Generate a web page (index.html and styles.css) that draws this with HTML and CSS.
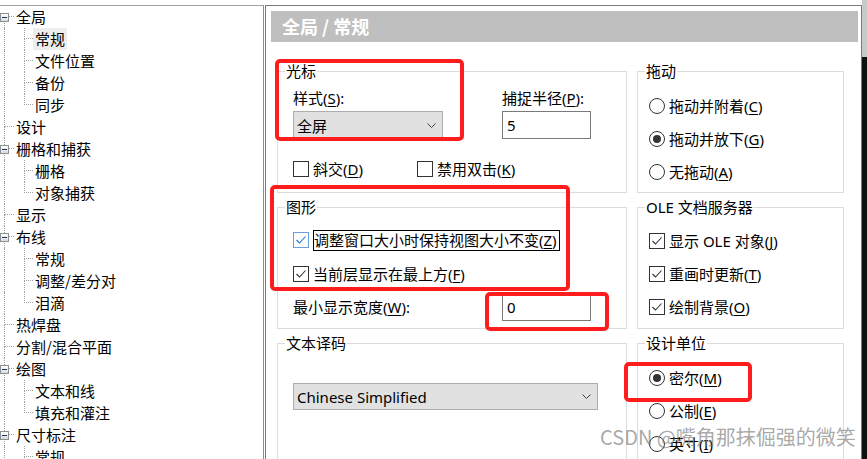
FILE: index.html
```html
<!DOCTYPE html>
<html lang="zh-CN">
<head>
<meta charset="utf-8">
<title>全局 / 常规</title>
<link rel="stylesheet" href="styles.css">
</head>
<body>
<div class="screen">
  <div class="main">
    <nav class="tree">
      <div class="row"><span class="g0 first"><i class="lt"></i><i class="lb"></i><b class="exp"></b></span><span class="lbl">全局</span></div>
      <div class="row"><span class="g0"><i class="lf"></i></span><span class="g1"><i class="lt"></i><i class="lb"></i></span><span class="lbl sel">常规</span></div>
      <div class="row"><span class="g0"><i class="lf"></i></span><span class="g1"><i class="lt"></i><i class="lb"></i></span><span class="lbl">文件位置</span></div>
      <div class="row"><span class="g0"><i class="lf"></i></span><span class="g1"><i class="lt"></i><i class="lb"></i></span><span class="lbl">备份</span></div>
      <div class="row"><span class="g0"><i class="lf"></i></span><span class="g1 last"><i class="lt"></i><i class="lb"></i></span><span class="lbl">同步</span></div>
      <div class="row"><span class="g0"><i class="lt"></i><i class="lb"></i></span><span class="lbl">设计</span></div>
      <div class="row"><span class="g0"><i class="lt"></i><i class="lb"></i><b class="exp"></b></span><span class="lbl">栅格和捕获</span></div>
      <div class="row"><span class="g0"><i class="lf"></i></span><span class="g1"><i class="lt"></i><i class="lb"></i></span><span class="lbl">栅格</span></div>
      <div class="row"><span class="g0"><i class="lf"></i></span><span class="g1 last"><i class="lt"></i><i class="lb"></i></span><span class="lbl">对象捕获</span></div>
      <div class="row"><span class="g0"><i class="lt"></i><i class="lb"></i></span><span class="lbl">显示</span></div>
      <div class="row"><span class="g0"><i class="lt"></i><i class="lb"></i><b class="exp"></b></span><span class="lbl">布线</span></div>
      <div class="row"><span class="g0"><i class="lf"></i></span><span class="g1"><i class="lt"></i><i class="lb"></i></span><span class="lbl">常规</span></div>
      <div class="row"><span class="g0"><i class="lf"></i></span><span class="g1"><i class="lt"></i><i class="lb"></i></span><span class="lbl">调整/差分对</span></div>
      <div class="row"><span class="g0"><i class="lf"></i></span><span class="g1 last"><i class="lt"></i><i class="lb"></i></span><span class="lbl">泪滴</span></div>
      <div class="row"><span class="g0"><i class="lt"></i><i class="lb"></i></span><span class="lbl">热焊盘</span></div>
      <div class="row"><span class="g0"><i class="lt"></i><i class="lb"></i></span><span class="lbl">分割/混合平面</span></div>
      <div class="row"><span class="g0"><i class="lt"></i><i class="lb"></i><b class="exp"></b></span><span class="lbl">绘图</span></div>
      <div class="row"><span class="g0"><i class="lf"></i></span><span class="g1"><i class="lt"></i><i class="lb"></i></span><span class="lbl">文本和线</span></div>
      <div class="row"><span class="g0"><i class="lf"></i></span><span class="g1 last"><i class="lt"></i><i class="lb"></i></span><span class="lbl">填充和灌注</span></div>
      <div class="row"><span class="g0"><i class="lt"></i><i class="lb"></i><b class="exp"></b></span><span class="lbl">尺寸标注</span></div>
      <div class="row"><span class="g0"><i class="lf"></i></span><span class="g1"><i class="lt"></i><i class="lb"></i></span><span class="lbl">常规</span></div>
    </nav>

    <section class="dialog">
      <div class="title">全局 / 常规</div>
      <div class="groups">
        <fieldset class="grp">
          <legend>光标</legend>
          <div class="body-cursor">
            <div class="pair labels"><span class="col">样式(<u>S</u>):</span><span>捕捉半径(<u>P</u>):</span></div>
            <div class="pair fields">
              <div class="col"><div class="combo w150"><span>全屏</span><svg class="chev" viewBox="0 0 9 5"><polyline points="0.5,0.5 4.5,4.5 8.5,0.5"/></svg></div></div>
              <div class="edit">5</div>
            </div>
            <div class="checks">
              <label class="chk w124"><span class="box"></span><span>斜交(<u>D</u>)</span></label>
              <label class="chk"><span class="box"></span><span>禁用双击(<u>K</u>)</span></label>
            </div>
          </div>
        </fieldset>

        <fieldset class="grp">
          <legend>拖动</legend>
          <div class="list">
            <label class="opt"><span class="radio"></span><span>拖动并附着(<u>C</u>)</span></label>
            <label class="opt"><span class="radio on"></span><span>拖动并放下(<u>G</u>)</span></label>
            <label class="opt"><span class="radio"></span><span>无拖动(<u>A</u>)</span></label>
          </div>
        </fieldset>

        <fieldset class="grp">
          <legend>图形</legend>
          <div class="body-gfx">
            <label class="chk line"><span class="box focus"><svg viewBox="0 0 14 14"><polyline points="2.5,7 5.5,10 11.5,3.5"/></svg></span><span class="focus-rect">调整窗口大小时保持视图大小不变(<u>Z</u>)</span></label>
            <label class="chk line second"><span class="box"><svg viewBox="0 0 14 14"><polyline points="2.5,7 5.5,10 11.5,3.5"/></svg></span><span>当前层显示在最上方(<u>F</u>)</span></label>
            <div class="pair width-row"><span class="col">最小显示宽度(<u>W</u>):</span><div class="edit">0</div></div>
          </div>
        </fieldset>

        <fieldset class="grp">
          <legend>OLE 文档服务器</legend>
          <div class="list ole">
            <label class="opt"><span class="box"><svg viewBox="0 0 14 14"><polyline points="2.5,7 5.5,10 11.5,3.5"/></svg></span><span>显示 OLE 对象(<u>J</u>)</span></label>
            <label class="opt"><span class="box"><svg viewBox="0 0 14 14"><polyline points="2.5,7 5.5,10 11.5,3.5"/></svg></span><span>重画时更新(<u>T</u>)</span></label>
            <label class="opt"><span class="box"><svg viewBox="0 0 14 14"><polyline points="2.5,7 5.5,10 11.5,3.5"/></svg></span><span>绘制背景(<u>O</u>)</span></label>
          </div>
        </fieldset>

        <fieldset class="grp">
          <legend>文本译码</legend>
          <div class="body-text">
            <div class="combo w305"><span>Chinese Simplified</span><svg class="chev" viewBox="0 0 9 5"><polyline points="0.5,0.5 4.5,4.5 8.5,0.5"/></svg></div>
          </div>
        </fieldset>

        <fieldset class="grp">
          <legend>设计单位</legend>
          <div class="list">
            <label class="opt"><span class="radio on"></span><span>密尔(<u>M</u>)</span></label>
            <label class="opt"><span class="radio"></span><span>公制(<u>E</u>)</span></label>
            <label class="opt"><span class="radio"></span><span>英寸(<u>I</u>)</span></label>
          </div>
        </fieldset>
      </div>
    </section>
  </div>
  <div class="edge"><div class="edge-top"></div><div class="edge-bot"></div></div>

  <div class="mark mark-1"></div>
  <div class="mark mark-2"></div>
  <div class="mark mark-3"></div>
  <div class="mark mark-4"></div>
  <div class="watermark">CSDN @嘴角那抹倔强的微笑</div>
</div>
</body>
</html>
```

FILE: styles.css
```css
* { box-sizing: border-box; }
html, body { margin: 0; padding: 0; background: #fff; }
body {
  font-family: "Noto Sans", "Noto Sans CJK SC", sans-serif;
  font-size: 15px;
  color: #000;
}
u { text-decoration: underline; text-underline-offset: 2px; }

.screen {
  position: relative;
  display: flex;
  width: 867px;
  height: 459px;
  overflow: hidden;
}
.main {
  display: flex;
  gap: 1px;
  width: 862px;
  flex: none;
  padding-top: 5px;
}

/* ---------- tree ---------- */
.tree {
  width: 264px;
  flex: none;
  border-top: 1px solid #a0a0a0;
  border-right: 1px solid #8c8c8c;
  overflow: hidden;
}
.row { display: flex; height: 22px; }
.g0, .g1 {
  display: grid;
  grid-template-rows: 11px 11px;
  height: 22px;
  flex: none;
}
.g0 { grid-template-columns: 4px 10px; width: 14px; }
.g1 { grid-template-columns: 10px 9px; width: 19px; }
.lt {
  grid-column: 2; grid-row: 1;
  border-left: 1px dotted #a0a0a0;
  border-bottom: 1px dotted #a0a0a0;
}
.lb { grid-column: 2; grid-row: 2; border-left: 1px dotted #a0a0a0; }
.lf { grid-column: 2; grid-row: 1 / 3; border-left: 1px dotted #a0a0a0; }
.first .lt { border-left: 0; }
.last .lb { border-left: 0; }
.exp {
  grid-column: 1 / 3; grid-row: 1 / 3;
  align-self: center; justify-self: start;
  width: 9px; height: 9px;
  margin-top: 1px;
  border: 1px solid #8e8f8f;
  background: linear-gradient(#ffffff, #d6dbe3);
  display: flex; align-items: center; justify-content: center;
}
.exp::before { content: ""; width: 5px; height: 1px; background: #24356b; }
.lbl {
  padding: 0 2px;
  line-height: 22px;
  white-space: nowrap;
  font-family: "Noto Sans CJK SC", sans-serif;
}
.sel { background: #ededed; }

/* ---------- dialog ---------- */
.dialog {
  width: 597px;
  flex: none;
  border: 1px solid #7a7a7a;
  border-bottom: 0;
  padding: 5px 3px 0 5px;
}
.title {
  height: 31px;
  line-height: 31px;
  background: #bfbfbf;
  color: #fff;
  font-family: "Noto Sans CJK SC", sans-serif;
  font-size: 18px;
  font-weight: bold;
  padding-left: 11px;
}
.groups {
  display: grid;
  grid-template-columns: 350px 207px;
  grid-template-rows: 131px 131px 131px;
  column-gap: 10px;
  row-gap: 5px;
  margin-top: 20px;
  padding-left: 6px;
}
.grp {
  margin: 0;
  padding: 0;
  border: 1px solid #dcdcdc;
  min-width: 0;
}
.grp > legend {
  margin-left: 7px;
  padding: 0 1px;
  line-height: 19px;
  font-size: 15px;
}

.pair { display: flex; align-items: center; }
.col { width: 209px; flex: none; }
.labels { line-height: 20px; margin-top: 7px; }
.fields { margin-top: 3px; align-items: flex-start; }

.body-cursor { padding-left: 15px; }
.checks { display: flex; margin-top: 20px; height: 20px; }

.combo {
  display: flex;
  align-items: center;
  justify-content: space-between;
  height: 28px;
  background: #e1e1e1;
  border: 1px solid #adadad;
  padding: 0 6px 0 3px;
  white-space: nowrap;
}
.w150 { width: 150px; }
.w305 { width: 305px; height: 27px; }
.chev { width: 9px; height: 5px; fill: none; stroke: #404040; stroke-width: 1; }
.edit {
  width: 89px;
  height: 28px;
  border: 1px solid #7a7a7a;
  background: #fff;
  padding-left: 4px;
  line-height: 26px;
}

.chk { display: flex; align-items: center; gap: 4px; line-height: 20px; white-space: nowrap; }
.w124 { width: 124px; flex: none; }
.box {
  width: 16px; height: 16px;
  flex: none;
  border: 1px solid #333;
  background: #fff;
  display: flex; align-items: center; justify-content: center;
}
.box svg { width: 14px; height: 14px; fill: none; stroke: #333; stroke-width: 1.1; }
.box.focus { border-color: #6a9fd8; }
.box.focus svg { stroke: #1a73d0; }
.radio {
  width: 16px; height: 16px;
  flex: none;
  border: 1px solid #333;
  border-radius: 50%;
  background: #fff;
  display: flex; align-items: center; justify-content: center;
}
.radio.on::after {
  content: "";
  width: 8px; height: 8px;
  border-radius: 50%;
  background: #333;
}

.body-gfx { padding: 13px 0 0 15px; }
.line { height: 20px; }
.second { margin-top: 14px; }
.focus-rect { border: 1px solid #000; line-height: 19px; padding-right: 2px; }
.width-row { margin-top: 9px; line-height: 20px; }

.list { display: flex; flex-direction: column; padding: 8px 0 0 11px; }
.list.ole { padding-top: 7px; }
.opt { display: flex; align-items: center; gap: 4px; height: 33px; white-space: nowrap; }

.body-text { padding: 30px 0 0 15px; }

/* ---------- right edge of screen ---------- */
.edge { width: 5px; flex: none; display: flex; flex-direction: column; }
.edge-top { height: 57px; background: #c9c9c9; }
.edge-bot { flex: 1; background: #101010; }

/* ---------- overlays ---------- */
.mark {
  position: absolute;
  border: 4px solid #ff1c1c;
  border-radius: 5px;
}
.mark-1 { left: 275px; top: 59px; width: 189px; height: 82px; }
.mark-2 { left: 270px; top: 185px; width: 300px; height: 106px; }
.mark-3 { left: 485px; top: 292px; width: 124px; height: 39px; }
.mark-4 { left: 624px; top: 362px; width: 128px; height: 40px; }

.watermark {
  position: absolute;
  left: 600px;
  top: 425px;
  font-family: "Noto Sans CJK SC", sans-serif;
  font-size: 20px;
  line-height: 24px;
  color: rgba(120, 120, 120, 0.65);
  white-space: nowrap;
}
```
